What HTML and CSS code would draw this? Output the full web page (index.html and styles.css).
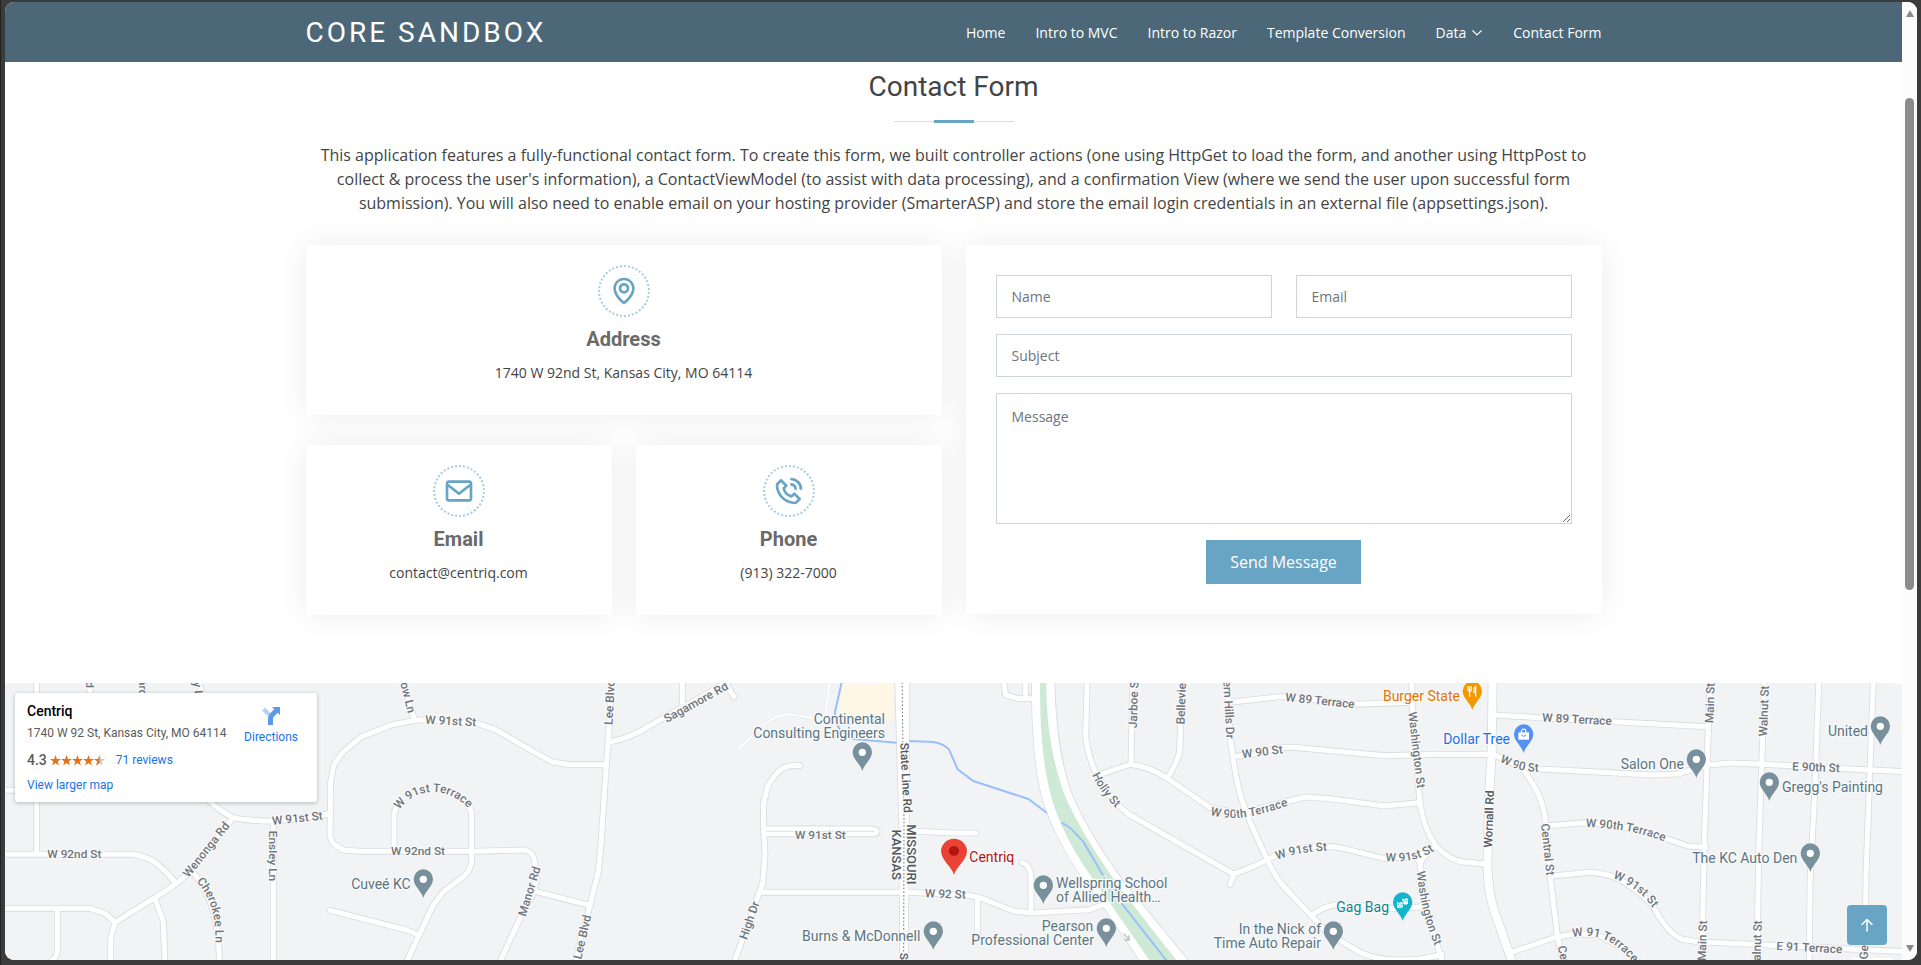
FILE: index.html
```html
<!DOCTYPE html>
<html lang="en">
<head>
<meta charset="utf-8">
<title>Contact Form - Core Sandbox</title>
<link rel="stylesheet" href="styles.css">
</head>
<body>
<div class="window">
  <div class="page">
    <header class="header">
      <div class="container header-inner">
        <a class="logo">CORE SANDBOX</a>
        <nav class="nav">
          <a>Home</a>
          <a>Intro to MVC</a>
          <a>Intro to Razor</a>
          <a>Template Conversion</a>
          <a class="dropdown">Data <svg class="chevron" viewBox="0 0 12 12"><path d="M1.5 3.5 6 8l4.500-4.500"/></svg></a>
          <a>Contact Form</a>
        </nav>
      </div>
    </header>

    <section class="contact container">
      <div class="section-title">
        <h2>Contact Form</h2>
        <div class="rule"></div>
        <p>This application features a fully-functional contact form. To create this form, we built controller actions (one using HttpGet to load the form, and another using HttpPost to collect &amp; process the user's information), a ContactViewModel (to assist with data processing), and a confirmation View (where we send the user upon successful form submission). You will also need to enable email on your hosting provider (SmarterASP) and store the email login credentials in an external file (appsettings.json).</p>
      </div>
      <div class="columns">
        <div class="info">
          <div class="info-box wide">
            <svg class="info-icon" viewBox="0 0 24 24"><path d="M12 14c2.206 0 4-1.794 4-4s-1.794-4-4-4-4 1.794-4 4 1.794 4 4 4zm0-6c1.103 0 2 .897 2 2s-.897 2-2 2-2-.897-2-2 .897-2 2-2z"/><path d="M11.42 21.814a.998.998 0 0 0 1.160 0C12.884 21.599 20.029 16.440 20 10c0-4.411-3.589-8-8-8S4 5.589 4 9.995c-.029 6.445 7.116 11.604 7.420 11.819zM12 4c3.309 0 6 2.691 6 6.005.021 4.438-4.388 8.423-6 9.730-1.611-1.308-6.021-5.294-6-9.735 0-3.309 2.691-6 6-6z"/></svg>
            <h3>Address</h3>
            <p>1740 W 92nd St, Kansas City, MO 64114</p>
          </div>
          <div class="info-box">
            <svg class="info-icon" viewBox="0 0 24 24"><path d="M20 4H4c-1.103 0-2 .897-2 2v12c0 1.103.897 2 2 2h16c1.103 0 2-.897 2-2V6c0-1.103-.897-2-2-2zm0 2v.511l-8 6.223-8-6.222V6h16zM4 18V9.044l7.386 5.745a.994.994 0 0 0 1.228 0L20 9.044 20.002 18H4z"/></svg>
            <h3>Email</h3>
            <p>contact@centriq.com</p>
          </div>
          <div class="info-box">
            <svg class="info-icon" viewBox="0 0 24 24"><path d="M16.570 22a2 2 0 0 0 1.430-.59l2.710-2.710a1 1 0 0 0 0-1.410l-4-4a1 1 0 0 0-1.410 0l-1.600 1.590a7.550 7.550 0 0 1-3-1.590 7.620 7.620 0 0 1-1.590-3l1.590-1.600a1 1 0 0 0 0-1.410l-4-4a1 1 0 0 0-1.410 0L2.590 6A2 2 0 0 0 2 7.430 15.280 15.280 0 0 0 6.300 17.700 15.280 15.280 0 0 0 16.570 22zM6 5.410 8.590 8 7.300 9.290a1 1 0 0 0-.3.910 10.120 10.120 0 0 0 2.300 4.500 10.080 10.080 0 0 0 4.500 2.300 1 1 0 0 0 .910-.270L16 15.410 18.590 18l-2 2a13.280 13.280 0 0 1-8.870-3.710A13.280 13.280 0 0 1 4 7.410zM20 11h2a8.810 8.810 0 0 0-9-9v2a6.770 6.770 0 0 1 7 7z"/><path d="M13 8c2.100 0 3 .870 3 3h2c0-3.220-1.780-5-5-5z"/></svg>
            <h3>Phone</h3>
            <p>(913) 322-7000</p>
          </div>
        </div>
        <form class="form">
          <div class="form-row">
            <input type="text" placeholder="Name">
            <input type="text" placeholder="Email">
          </div>
          <input type="text" placeholder="Subject">
          <textarea placeholder="Message"></textarea>
          <button type="button">Send Message</button>
        </form>
      </div>
    </section>

    <section class="map">
      <svg class="map-canvas" viewBox="15 24 5691 831" preserveAspectRatio="none">
        <defs>
          <g id="trails">
            <path d="M2492 0 2475 130M2440 128 2365 118Q2320 125 2290 150L2215 222"/>
          </g>
          <g id="streets">
            <path d="M110 0V535M15 346H110M15 538H400Q440 545 470 565 500 590 528 625M270 0V55M430 0V55M592 0 607 60"/>
            <path d="M600 350Q650 405 700 428 740 438 820 438L900 430 990 416M700 428 560 598Q545 618 470 665L345 742"/>
            <path d="M15 700H270L315 715 345 742 332 790V870M172 700V830Q170 850 145 864M465 672 490 740 495 870M585 600Q660 690 658 870M820 440V870"/>
            <path d="M1250 135 1175 150 1085 185 1030 230 1002 268 992 320 990 480Q993 500 1005 510L1030 525 1080 529H1420L1570 525Q1595 527 1602 550L1610 600 1602 650 1560 730 1495 870"/>
            <path d="M1205 0 1243 135 1300 135 1430 145 1485 163 1600 230 1655 260 1710 269H1815M1835 0 1826 180 1817 300 1802 520 1795 590 1770 690 1740 800 1725 870M1832 200Q1890 190 1950 152L2185 20"/>
            <path d="M1182 525V420Q1184 402 1196 386M1404 392Q1415 405 1415 420V560Q1410 590 1390 605L1330 650 1300 690 1215 870M990 706 1220 765 1255 780M1610 650 1772 692"/>
            <path d="M2047 0V100M2160 0 2202 65M2400 272C2345 270 2335 285 2303 332L2290 390 2291 460 2295 540 2288 625 2275 660 2200 870"/>
            <path d="M2288 652H2720L2900 660 2940 668 3040 708 3095 714 3270 704 3310 688M2932 670V780M3093 714V610Q3092 570 3067 563M2730 468 2860 474H2928"/>
            <path d="M3008 0 3017 60 3055 71H3100M3077 0V71M3262 0 3257 180Q3262 240 3290 300L3340 380 3390 420 3700 597Q3740 585 3800 555L3850 530 3930 515H4000L4020 518 4150 550 4250 545 4305 515M3702 597 3690 628"/>
            <path d="M3295 300 3390 268Q3450 275 3502 310L3630 398 3720 415 3840 385 3915 366 3990 371 4155 393 4255 383M3399 0 3393 268M3547 0 3539 230Q3530 265 3502 310"/>
            <path d="M3680 0 3692 200 3700 250C3715 380 3750 440 3800 550Q3825 610 3870 655L3932 720 3975 765Q4030 805 4060 820 4110 855 4200 855 4270 855 4325 838"/>
            <path d="M3690 82 3840 65 3900 68 4060 88 4235 82M3700 245 3760 238 3840 217H3880L4155 242 4300 238H4480L4530 262 4600 282 4640 283 4830 293 4953 300 5033 297 5123 270 5193 264 5293 268 5503 280 5720 290"/>
            <path d="M4235 0 4237 110 4257 350Q4262 450 4310 515 4350 555 4385 560L4460 568M4285 530 4262 560V600L4290 750 4332 870M4245 543 4262 565M3935 720Q3985 688 4020 688L4200 702 4265 695"/>
            <path d="M4480 120 4620 128 4840 140 5123 155M4570 285Q4630 360 4637 440L4650 600 4672 780 4690 870M4645 452 4755 443 4850 450 5003 492 5063 513 5118 517"/>
            <path d="M4655 603 4770 592Q4840 598 4870 620 4940 665 4963 700 5000 770 5043 792L5093 800 5300 810 5720 830M4540 830 4672 785 4720 778H4790L4870 820 4925 870"/>
          </g>
          <g id="avenues">
            <path d="M5131 0 5125 160 5113 500 5105 870M5293 0 5288 190 5277 500 5270 870M5457 0 5445 340 5430 620 5428 870M5621 0 5610 280 5598 600 5595 870"/>
          </g>
          <path id="wornall" d="M4478 0 4475 240 4468 350 4462 570Q4465 650 4480 700L4540 870"/>
          <g id="lanes"><path d="M2292 461H2615Q2632 463 2632 470 2632 478 2615 477H2292"/></g>
          <path id="parkway" d="M3095 0 3096 80C3100 250 3115 340 3140 410 3180 510 3230 590 3300 680L3428 870H3575L3420 680C3340 590 3260 460 3220 370 3180 270 3165 150 3163 0Z"/>
          <path id="state-road" d="M2685 0 2698 450 2700 870H2723L2727 450 2728 0Z"/>
          <g id="pin"><path d="M0 57C-4 38-29 22-29 0A29 29 0 1 1 29 0C29 22 4 38 0 57Z"/></g>
          <path id="c-wenonga" d="M563 613 693 450"/>
          <path id="c-cherokee" d="M592 622Q650 690 646 800"/>
          <path id="c-91terr" d="M1185 425C1235 330 1350 325 1420 418"/>
          <path id="c-holly" d="M3275 298Q3305 360 3349 400"/>
          <path id="c-90terr" d="M3623 417C3705 445 3780 420 3872 389"/>
          <path id="c-wash1" d="M4224 106 4252 346"/>
          <path id="c-wash2" d="M4250 586Q4263 718 4306 816"/>
          <path id="c-91a" d="M3828 556Q3900 528 3985 527"/>
          <path id="c-91b" d="M4151 558Q4248 567 4308 524"/>
          <path id="c-90b" d="M4495 258Q4558 293 4620 290"/>
          <path id="c-90c" d="M4752 456Q4897 460 4997 501"/>
          <path id="c-91c" d="M4834 607Q4923 640 4960 703"/>
          <path id="c-91d" d="M4714 788Q4825 762 4902 868"/>
        </defs>
        <rect class="land" x="0" y="0" width="5800" height="900"/>
        <path class="zone" d="M2530 0H2682V135H2512Z"/>
        <use class="casing thin" href="#trails"/><use class="road thin" href="#trails"/>
        <use class="casing lane" href="#lanes"/>
        <use class="casing" href="#streets"/><use class="casing avenue" href="#avenues"/><use class="casing main" href="#wornall"/>
        <use class="edge" href="#parkway"/><use class="edge" href="#state-road"/>
        <use class="road" href="#streets"/><use class="road avenue" href="#avenues"/><use class="road main" href="#wornall"/>
        <use class="road lane" href="#lanes"/>
        <path class="water" d="M2530 0 2505 110Q2505 140 2520 165L2560 192 2690 203"/>
        <use class="fill-road" href="#parkway"/><use class="fill-road" href="#state-road"/>
        <path class="park" d="M3120 0V60C3122 230 3140 340 3172 420 3210 520 3270 600 3320 670L3458 870H3540L3400 690C3320 590 3230 450 3190 350 3150 230 3139 140 3139 0Z"/>
        <path class="water" d="M2728 198 2800 201Q2830 205 2847 224L2873 283 2920 318 3085 372 3141 414M3185 443 3210 458 3250 500 3310 603M3330 645 3337 654M3365 685 3510 870"/>
        <path class="border" d="M2706 0 2712 440 2711 870"/>
        <path class="arrow" d="M3371 776 3384 791M3387 781V795H3374"/>
        <path class="road thin" d="M5630 18 5710 24"/>
        <rect class="fill-road" x="5558" y="849" width="120" height="10" rx="4"/>

        <g class="street-labels">
          <text x="223" y="550">W 92nd St</text>
          <text class="last" transform="translate(270 39) rotate(90)" dy="12">Rd</text>
          <text class="first" transform="translate(430 12) rotate(90)" dy="12">ard</text>
          <text class="first" transform="translate(592 20) rotate(84)" dy="12">y Ln</text>
          <text transform="translate(892 430) rotate(-6)" dy="12">W 91st St</text>
          <text><textPath href="#c-wenonga" startOffset="50%">Wenonga Rd</textPath></text>
          <text><textPath href="#c-cherokee" startOffset="50%">Cherokee Ln</textPath></text>
          <text transform="translate(819 543) rotate(90)" dy="12">Ensley Ln</text>
          <text transform="translate(1223 63) rotate(76)" dy="12">low Ln</text>
          <text transform="translate(1352 138) rotate(3)" dy="12">W 91st St</text>
          <text><textPath href="#c-91terr" startOffset="50%">W 91st Terrace</textPath></text>
          <text x="1254" y="539">W 92nd St</text>
          <text transform="translate(1588 649) rotate(-73)" dy="12">Manor Rd</text>
          <text transform="translate(1829 82) rotate(-87)" dy="12">Lee Blvd</text>
          <text transform="translate(1747 786) rotate(-77)" dy="12">Lee Blvd</text>
          <text transform="translate(2088 82) rotate(-29)" dy="12">Sagamore Rd</text>
          <text x="2461" y="491">W 91st St</text>
          <text transform="translate(2248 736) rotate(-71)" dy="12">High Dr</text>
          <text transform="translate(2836 657) rotate(2)" dy="12">W 92 St</text>
          <text class="dark" transform="translate(2718 308) rotate(87)" dy="12">State Line Rd</text>
          <text class="dark first" transform="translate(2711 833) rotate(90)" dy="12">State</text>
          <text class="dark" transform="translate(4467 432) rotate(-88)" dy="12">Wornall Rd</text>
          <text><textPath href="#c-holly" startOffset="50%">Holly St</textPath></text>
          <text transform="translate(3401 83) rotate(-88)" dy="12">Jarboe St</text>
          <text transform="translate(3544 73) rotate(-88)" dy="12">Belleview</text>
          <text transform="translate(3686 98) rotate(87)" dy="12">tern Hills Dr</text>
          <text transform="translate(3787 230) rotate(-7)" dy="12">W 90 St</text>
          <text><textPath href="#c-90terr" startOffset="50%">W 90th Terrace</textPath></text>
          <text transform="translate(3960 77) rotate(6)" dy="12">W 89 Terrace</text>
          <text><textPath href="#c-wash1" startOffset="50%">Washington St</textPath></text>
          <text><textPath href="#c-wash2" startOffset="50%">Washington St</textPath></text>
          <text><textPath href="#c-91a" startOffset="50%">W 91st St</textPath></text>
          <text><textPath href="#c-91b" startOffset="50%">W 91st St</textPath></text>
          <text><textPath href="#c-90b" startOffset="50%">W 90 St</textPath></text>
          <text transform="translate(4731 133) rotate(3)" dy="12">W 89 Terrace</text>
          <text transform="translate(4643 523) rotate(84)" dy="12">Central St</text>
          <text class="first" transform="translate(4684 812) rotate(76)" dy="12">Central St</text>
          <text><textPath href="#c-90c" startOffset="50%">W 90th Terrace</textPath></text>
          <text><textPath href="#c-91c" startOffset="50%">W 91st St</textPath></text>
          <text><textPath href="#c-91d" startOffset="50%">W 91 Terrace</textPath></text>
          <text transform="translate(5130 84) rotate(-88)" dy="12">Main St</text>
          <text transform="translate(5107 797) rotate(-88)" dy="12">Main St</text>
          <text transform="translate(5292 108) rotate(-88)" dy="12">Walnut St</text>
          <text transform="translate(5271 812) rotate(-88)" dy="12">Walnut St</text>
          <text transform="translate(5448 277) rotate(2)" dy="12">E 90th St</text>
          <text transform="translate(5428 818) rotate(3)" dy="12">E 91 Terrace</text>
          <text class="first" transform="translate(5591 853) rotate(-88)" dy="12">Georgia</text>
        </g>
        <g class="state-labels">
          <text transform="translate(2733 538) rotate(90)" dy="13">MISSOURI</text>
          <text transform="translate(2688 539) rotate(90)" dy="13">KANSAS</text>
        </g>
        <g class="poi">
          <text class="end" x="1232" y="642">Cuveé KC</text>
          <text class="end" x="2655" y="147">Continental</text>
          <text class="end" x="2655" y="189">Consulting Engineers</text>
          <text class="end" x="2761" y="798">Burns &amp; McDonnell</text>
          <text x="3168" y="639">Wellspring School</text>
          <text x="3168" y="681">of Allied Health…</text>
          <text class="end" x="3280" y="768">Pearson</text>
          <text class="end" x="3282" y="810">Professional Center</text>
          <text class="end" x="3963" y="777">In the Nick of</text>
          <text class="end" x="3963" y="819">Time Auto Repair</text>
          <text class="end" x="5052" y="282">Salon One</text>
          <text x="5346" y="351">Gregg's Painting</text>
          <text class="end" x="5604" y="183">United</text>
          <text class="end" x="5392" y="564">The KC Auto Den</text>
          <text class="end food" x="4380" y="78">Burger State</text>
          <text class="end shop" x="4530" y="207">Dollar Tree</text>
          <text class="end fun" x="4167" y="711">Gag Bag</text>
          <text class="place" x="2908" y="561">Centriq</text>
        </g>
        <g class="pins">
          <use href="#pin" x="1270" y="612"/><circle cx="1270" cy="613" r="11"/>
          <use href="#pin" x="2587" y="231"/><circle cx="2587" cy="232" r="11"/>
          <use href="#pin" x="2800" y="768"/><circle cx="2800" cy="769" r="11"/>
          <use href="#pin" x="3130" y="630"/><circle cx="3130" cy="631" r="11"/>
          <use href="#pin" x="3319" y="759"/><circle cx="3319" cy="760" r="11"/>
          <use href="#pin" x="4000" y="768"/><circle cx="4000" cy="769" r="11"/>
          <use href="#pin" x="5089" y="252"/><circle cx="5089" cy="253" r="11"/>
          <use href="#pin" x="5308" y="321"/><circle cx="5308" cy="322" r="11"/>
          <use href="#pin" x="5641" y="153"/><circle cx="5641" cy="154" r="11"/>
          <use href="#pin" x="5431" y="534"/><circle cx="5431" cy="535" r="11"/>
        </g>
        <use class="pin-food" href="#pin" x="4417" y="48"/>
        <path class="glyph" d="M4404 34V44Q4404 49 4409 49V65M4409 34V48M4414 34V44Q4414 49 4409 49M4427 65V34Q4421 38 4422 52H4427"/>
        <use class="pin-shop" href="#pin" x="4571" y="177"/>
        <path class="bag" d="M4555 172H4587V194H4555Z"/><path class="glyph" d="M4564 172Q4564 162 4571 162T4578 172"/><path class="smile" d="M4564 180Q4571 189 4578 180"/>
        <use class="pin-fun" href="#pin" x="4208" y="681"/>
        <path class="bag" d="M4191 681 4197 684 4204 681 4208 682V697Q4200 703 4191 697ZM4207 670 4213 673 4219 670 4224 671V686Q4217 691 4210 687V679H4207Z"/>
        <path class="fun-face" d="M4194 688H4198M4202 688H4206M4211 677H4214M4218 677H4221M4197 696Q4200 693 4203 696"/>
        <g class="pin-place" transform="translate(2862 528) scale(1.340 1.260)"><use href="#pin"/><circle r="11.500"/></g>
      </svg>
      <div class="place-card">
        <div class="place-info">
          <strong>Centriq</strong>
          <span class="place-address">1740 W 92 St, Kansas City, MO 64114</span>
          <div class="rating">
            <b>4.3</b>
            <span class="stars"><svg viewBox="0 0 55 11"><defs><path id="star" d="M5.500 0 6.900 4H11L7.700 6.500 8.900 10.600 5.500 8.100 2.100 10.600 3.300 6.500 0 4H4.100Z"/><clipPath id="half"><path d="M0 0H5.500V11H0Z"/></clipPath></defs><use href="#star"/><use href="#star" x="11"/><use href="#star" x="22"/><use href="#star" x="33"/><g transform="translate(44 0)"><use class="off" href="#star"/><use href="#star" clip-path="url(#half)"/></g></svg></span>
            <a>71 reviews</a>
          </div>
          <a>View larger map</a>
        </div>
        <div class="directions">
          <svg viewBox="0 0 18 18"><path class="faint" d="M1.500 2 9 9.500"/><path class="bold" d="M8.500 18V12Q8.500 9.500 10 8L14.500 3.500"/><path class="tip" d="M10 0H18V8Z"/></svg>
          <a>Directions</a>
        </div>
      </div>
      <a class="to-top"><svg viewBox="0 0 16 16"><path d="M8 14V2.500M3 7.500 8 2.500 13 7.500"/></svg></a>
    </section>
  </div>
  <div class="scrollbar">
    <i class="up"></i>
    <i class="thumb"></i>
    <i class="down"></i>
  </div>
</div>
</body>
</html>
```
FILE: styles.css
```css
* { box-sizing: border-box; }
body {
  margin: 0;
  padding: 2px 4px 5px 4px;
  height: 965px;
  overflow: hidden;
  background: #3b3b3b;
  border-left: 1px solid #222;
  font-family: "Open Sans", "Noto Sans", sans-serif;
  color: #444;
}
.window {
  display: flex;
  width: 1912px;
  height: 958px;
  background: #fff;
  border-radius: 9px;
  overflow: hidden;
}
.page { width: 1897px; display: flex; flex-direction: column; }
.container { width: 1320px; margin: 0 auto; padding: 0 12px; }

.header { background: #4c6878; height: 60px; flex: none; }
.header-inner { display: flex; justify-content: space-between; align-items: center; height: 60px; }
.logo { font: 400 28px/34px Roboto, sans-serif; letter-spacing: 3px; color: #fff; padding-top: 2px; }
.nav { display: flex; gap: 30px; font-size: 14px; font-weight: 500; color: #fff; padding-top: 2px; line-height: 20px; }
.dropdown { display: flex; align-items: center; gap: 5px; }
.chevron { width: 12px; height: 12px; fill: none; stroke: #fff; stroke-width: 1.1; }

.contact { flex: 1; }
.section-title { text-align: center; }
.section-title h2 { margin: 7px 0 0; font: 400 28px/36px Roboto, sans-serif; }
.rule {
  width: 120px;
  height: 3px;
  margin: 15px auto 20px;
  background:
    linear-gradient(#68a4c4, #68a4c4) center / 40px 3px no-repeat,
    linear-gradient(#ddd, #ddd) center / 120px 1px no-repeat;
}
.section-title p { margin: 0; font-size: 16px; line-height: 24px; }

.columns { display: grid; grid-template-columns: 1fr 1fr; gap: 24px; margin-top: 30px; align-items: start; }
.info { display: grid; grid-template-columns: 1fr 1fr; gap: 30px 24px; }
.info-box { height: 170px; padding-top: 20px; text-align: center; background: #fff; box-shadow: 0 0 30px rgba(0, 0, 0, .08); }
.wide { grid-column: span 2; }
.info-icon { display: block; width: 52px; height: 52px; margin: 0 auto; padding: 8px; border: 2px dotted #a6cce2; border-radius: 50%; fill: #68a4c4; }
.info-box h3 { margin: 10px 0; font: 700 20px/24px Roboto, sans-serif; color: #6a6a6a; }
.info-box p { margin: 0; font-size: 14px; line-height: 24px; }

.form { display: flex; flex-direction: column; gap: 16px; height: 369px; padding: 30px; background: #fff; box-shadow: 0 0 30px rgba(0, 0, 0, .08); }
.form-row { display: grid; grid-template-columns: 1fr 1fr; gap: 24px; }
.form input, .form textarea {
  width: 100%;
  height: 43px;
  padding: 10px 15px;
  border: 1px solid #ced4da;
  font: 14px/21px "Open Sans", sans-serif;
  background: #fff;
}
.form textarea { height: 131px; padding: 12px 15px; flex: none; }
.form ::placeholder { color: #6c757d; }
.form button {
  align-self: center;
  height: 44px;
  padding: 10px 24px;
  border: 0;
  background: #68a4c4;
  color: #fff;
  font: 16px/24px "Open Sans", sans-serif;
}

.map { position: relative; height: 277px; flex: none; }
.map-canvas { display: block; width: 1897px; height: 277px; font-family: Roboto, sans-serif; }
.land { fill: #f1f3f4; }
.zone { fill: #fef7e5; }
.park { fill: #ceead6; }
.water { fill: none; stroke: #9bbff9; stroke-width: 6; }
.casing, .road { fill: none; stroke-linecap: round; stroke-linejoin: round; }
.casing { stroke: #d9dce1; stroke-width: 20; }
.road { stroke: #fff; stroke-width: 15; }
.casing.thin { stroke: #e2e5e9; stroke-width: 8; }
.road.thin { stroke-width: 6; }
.casing.avenue { stroke-width: 20; }
.road.avenue { stroke-width: 15; }
.casing.main { stroke-width: 29; }
.road.main { stroke-width: 24; }
.casing.lane { stroke-width: 19; }
.road.lane { stroke-width: 13; }
.edge { fill: #fff; stroke: #d9dce1; stroke-width: 5; }
.fill-road { fill: #fff; }
.border { fill: none; stroke: #73787d; stroke-width: 3; stroke-dasharray: 5 6; }
.arrow { fill: none; stroke: #b5babf; stroke-width: 4; }
.street-labels text, .state-labels text, .poi text {
  paint-order: stroke;
  stroke: #f8f9fa;
  stroke-width: 8;
  stroke-linejoin: round;
}
.street-labels text { font-size: 35.5px; font-weight: 500; fill: #70757a; text-anchor: middle; }
.street-labels .first { text-anchor: start; }
.street-labels .last { text-anchor: end; }
.street-labels .dark { fill: #54585d; }
.state-labels text { font-size: 39px; font-weight: 500; fill: #54585d; text-anchor: middle; }
.poi text { font-size: 42px; fill: #5b7683; }
.poi .end { text-anchor: end; }
.poi .food { fill: #e37400; }
.poi .shop { fill: #1a73e8; }
.poi .fun { fill: #12858d; }
.poi .place { fill: #b31412; }
.pins { fill: #78909c; }
.pins circle { fill: #fff; }
.pin-food { fill: #f29900; }
.pin-shop { fill: #5491f5; }
.pin-fun { fill: #12b5cb; }
.glyph { fill: none; stroke: #fff; stroke-width: 3.5; }
.bag { fill: #fff; }
.smile { fill: none; stroke: #5491f5; stroke-width: 3; }
.fun-face { fill: none; stroke: #12b5cb; stroke-width: 2.5; }
.pin-place { fill: #ea4335; }
.pin-place circle { fill: #b31412; }

.place-card {
  position: absolute;
  left: 10px;
  top: 10px;
  width: 302px;
  height: 109px;
  padding: 9px 19px 0 12px;
  display: flex;
  justify-content: space-between;
  background: #fff;
  border-radius: 2px;
  box-shadow: 0 1px 4px rgba(0, 0, 0, .25);
  font: 12px/16px Roboto, sans-serif;
  color: #5b5b5b;
}
.place-card a { color: #1a73e8; }
.place-info { display: flex; flex-direction: column; align-items: flex-start; }
.place-info strong { font-size: 14px; font-weight: 500; line-height: 18px; color: #000; }
.place-address { margin-top: 5px; }
.rating { display: flex; align-items: center; margin: 11px 0 9px; }
.rating b { font-size: 14px; font-weight: 500; margin-right: 3px; }
.stars svg { display: block; width: 55px; height: 11px; fill: #e7711b; }
.stars .off { fill: #c9c9c9; }
.rating a { margin-left: 11px; }
.directions { display: flex; flex-direction: column; align-items: center; gap: 4px; padding-top: 5px; }
.directions svg { width: 18px; height: 18px; fill: none; }
.directions .faint { stroke: #b5d1f8; stroke-width: 4; }
.directions .bold { stroke: #5c9ae8; stroke-width: 5; }
.directions .tip { fill: #5c9ae8; }

.to-top {
  position: absolute;
  right: 15px;
  bottom: 15px;
  width: 40px;
  height: 40px;
  display: grid;
  place-items: center;
  border-radius: 4px;
  background: #68a4c4;
}
.to-top svg { width: 16px; height: 16px; fill: none; stroke: #fff; stroke-width: 1.5; stroke-linecap: round; stroke-linejoin: round; }

.scrollbar { width: 15px; display: flex; flex-direction: column; align-items: center; background: #fcfcfc; padding-top: 8px; }
.up { border: 4.5px solid transparent; border-top: 0; border-bottom: 7px solid #8b8b8b; }
.thumb { width: 9px; height: 492px; margin-top: 81px; border-radius: 5px; background: #8b8b8b; }
.down { margin-top: 355px; border: 4.5px solid transparent; border-bottom: 0; border-top: 7px solid #8b8b8b; }
```
